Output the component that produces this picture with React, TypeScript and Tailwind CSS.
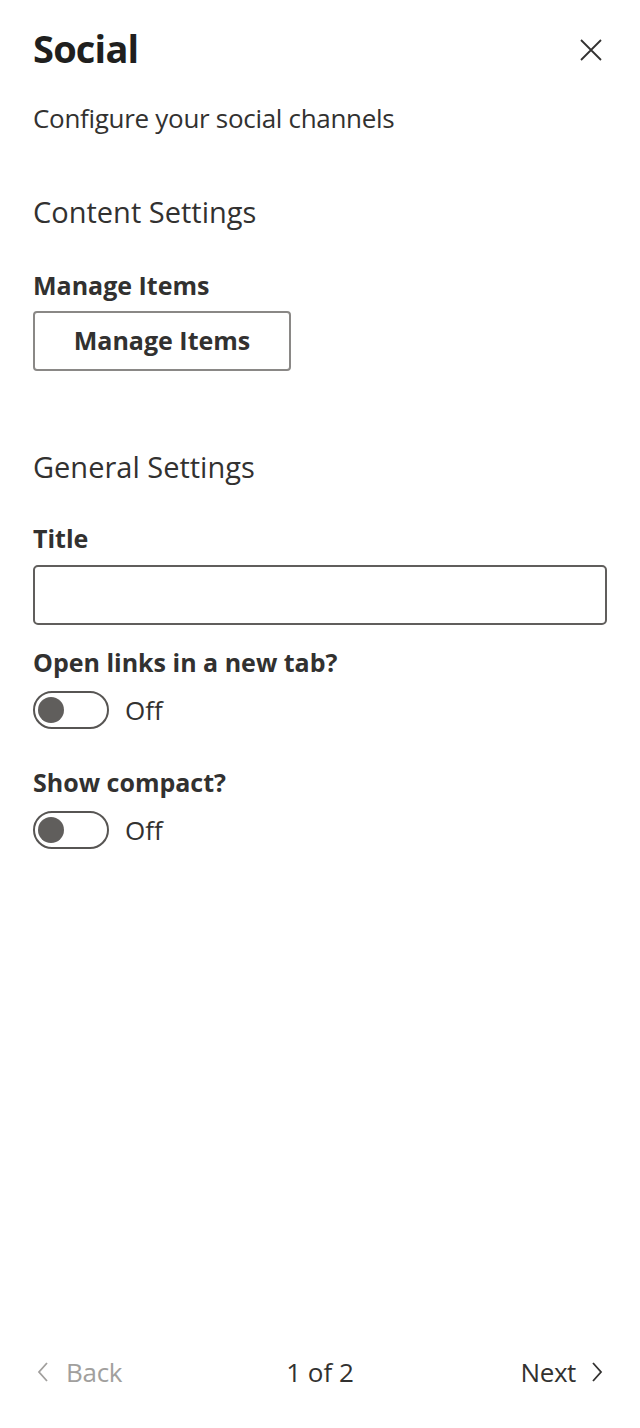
import React from 'react';

const font = "font-['Open_Sans','Noto_Sans',sans-serif]";

function Toggle({ label }: { label: string }) {
  return (
    <div className="flex flex-col">
      <div className="text-[25px] leading-[36px] font-bold text-[#323130]">{label}</div>
      <div className="mt-[11px] flex items-center h-[38px]">
        <div className="w-[76px] h-[38px] rounded-full border-2 border-[#575553] flex items-center pl-[3px]">
          <div className="w-[26px] h-[26px] rounded-full bg-[#605e5c]" />
        </div>
        <span className="ml-[16px] text-[26px] leading-[36px] text-[#323130]">Off</span>
      </div>
    </div>
  );
}

function Chevron({ dir, color }: { dir: 'left' | 'right'; color: string }) {
  return (
    <svg width="14" height="24" viewBox="0 0 14 24" fill="none" stroke={color} strokeWidth="1.8">
      {dir === 'left' ? <path d="M11 3 L3 12 L11 21" /> : <path d="M3 3 L11 12 L3 21" />}
    </svg>
  );
}

export default function App() {
  return (
    <div className={`${font} w-[640px] h-[1428px] bg-white flex flex-col text-[#323130]`}>
      <div className="px-[33px] flex-1 flex flex-col">
        <div className="pt-[22px] flex justify-between">
          <h1 className="text-[38px] leading-[52px] font-bold text-[#201f1e] tracking-[-0.8px]">Social</h1>
          <svg className="mt-[16px] mr-[4px]" width="24" height="24" viewBox="0 0 24 24" fill="none" stroke="#323130" strokeWidth="1.8">
            <path d="M2 2 L22 22 M22 2 L2 22" />
          </svg>
        </div>

        <p className="mt-[26px] text-[26px] leading-[36px] tracking-[-0.3px]">Configure your social channels</p>

        <h2 className="mt-[56px] text-[29px] leading-[40px] font-normal">Content Settings</h2>

        <div className="mt-[35px] text-[25px] leading-[36px] font-bold">Manage Items</div>
        <button className="mt-[8px] w-[258px] h-[60px] border-2 border-[#8a8886] rounded-[4px] bg-white text-[25px] font-bold text-[#323130]">
          Manage Items
        </button>

        <h2 className="mt-[76px] text-[29px] leading-[40px] font-normal">General Settings</h2>

        <div className="mt-[33px] text-[25px] leading-[36px] font-bold">Title</div>
        <input className="mt-[9px] w-full h-[60px] border-2 border-[#605e5c] rounded-[5px] bg-white px-[14px] text-[26px] outline-none" />

        <div className="mt-[19px]">
          <Toggle label="Open links in a new tab?" />
        </div>
        <div className="mt-[35px]">
          <Toggle label="Show compact?" />
        </div>
      </div>

      <div className="grid grid-cols-3 items-center px-[36px] pb-[38px] text-[26px] leading-[36px]">
        <div className="flex items-center justify-start gap-[16px] text-[#a19f9d]">
          <Chevron dir="left" color="#a19f9d" />
          <span className="tracking-[-0.3px]">Back</span>
        </div>
        <div className="text-center text-[#323130]">1 of 2</div>
        <div className="flex items-center justify-end gap-[14px] text-[#323130]">
          <span className="tracking-[-0.4px]">Next</span>
          <Chevron dir="right" color="#323130" />
        </div>
      </div>
    </div>
  );
}
